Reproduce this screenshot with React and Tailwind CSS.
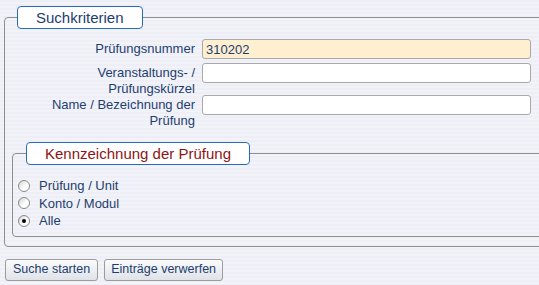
import React, { useState } from "react";

const font = { fontFamily: '"Liberation Sans", Arial, sans-serif' };

const Legend = ({ children, red }) => (
  <legend
    className={`h-[23px] mb-[4px] px-[18px] rounded-[4px] border border-[#2a6cbc] bg-white text-[15px] leading-[21px] ${
      red ? "ml-[8px] text-[#8e1414]" : "ml-[5px] text-[#1d3e6f]"
    }`}
  >
    {children}
  </legend>
);

const Radio = ({ checked, label, onChange }) => (
  <label className="flex items-center h-[17.5px] cursor-pointer" onClick={onChange}>
    <span className="flex items-center justify-center w-[12px] h-[12px] rounded-full border border-[#8a8a8a] bg-[linear-gradient(135deg,#d4d4d4,#ffffff_60%)]">
      {checked && <span className="w-[4px] h-[4px] rounded-full bg-black" />}
    </span>
    <span className="ml-[9px] text-[13px] text-[#1d3e6f]">{label}</span>
  </label>
);

export default function App() {
  const [nummer, setNummer] = useState("310202");
  const [kuerzel, setKuerzel] = useState("");
  const [name, setName] = useState("");
  const [kind, setKind] = useState("alle");

  const inputCls =
    "w-[329px] h-[20px] rounded-[3px] border border-[#a9a9a9] px-[3px] text-[13px] text-[#1d3e6f] outline-none";

  return (
    <div
      style={font}
      className="w-[539px] min-h-screen overflow-hidden pt-[6px] pl-[4px] bg-[repeating-linear-gradient(to_bottom,#eeeff6_0px,#eeeff6_2px,#f2f3f8_2px,#f2f3f8_4px)]"
    >
      <fieldset className="w-[560px] border border-[#8f8f8f] rounded-[4px] pl-[7px] pb-[9px]">
        <Legend>Suchkriterien</Legend>

        {/* Suchfelder */}
        <div className="flex flex-col pt-[6px]">
          <div className="flex items-start h-[24px]">
            <span className="w-[183px] pt-[2px] text-right text-[13px] leading-[16px] text-[#1d3e6f]">
              Prüfungsnummer
            </span>
            <input
              className={`ml-[7px] bg-[#fdefd0] ${inputCls}`}
              value={nummer}
              onChange={(e) => setNummer(e.target.value)}
            />
          </div>
          <div className="flex items-start h-[32px]">
            <span className="w-[183px] pt-[2px] text-right text-[13px] leading-[16px] text-[#1d3e6f]">
              Veranstaltungs- /<br />
              Prüfungskürzel
            </span>
            <input
              className={`ml-[7px] bg-white ${inputCls}`}
              value={kuerzel}
              onChange={(e) => setKuerzel(e.target.value)}
            />
          </div>
          <div className="flex items-start h-[34px]">
            <span className="w-[183px] pt-[2px] text-right text-[13px] leading-[16px] text-[#1d3e6f]">
              Name / Bezeichnung der
              <br />
              Prüfung
            </span>
            <input
              className={`ml-[7px] bg-white ${inputCls}`}
              value={name}
              onChange={(e) => setName(e.target.value)}
            />
          </div>
        </div>

        {/* Kennzeichnung */}
        <fieldset className="mt-[13px] border border-[#8f8f8f] rounded-[4px] pl-[5px] pt-[8px] pb-[6px]">
          <Legend red>Kennzeichnung der Prüfung</Legend>
          <Radio
            label="Prüfung / Unit"
            checked={kind === "unit"}
            onChange={() => setKind("unit")}
          />
          <Radio
            label="Konto / Modul"
            checked={kind === "modul"}
            onChange={() => setKind("modul")}
          />
          <Radio
            label="Alle"
            checked={kind === "alle"}
            onChange={() => setKind("alle")}
          />
        </fieldset>
      </fieldset>

      {/* Buttons */}
      <div className="flex gap-[6px] mt-[12px] ml-[1px]">
        <button className="h-[22px] px-[7px] rounded-[3px] border border-[#9c9c9c] bg-[linear-gradient(to_bottom,#fbfbfc,#dfe2e8)] text-[12.5px] text-[#1d3e6f]">
          Suche starten
        </button>
        <button className="h-[22px] px-[6px] rounded-[3px] border border-[#9c9c9c] bg-[linear-gradient(to_bottom,#fbfbfc,#dfe2e8)] text-[12.5px] text-[#1d3e6f]">
          Einträge verwerfen
        </button>
      </div>
    </div>
  );
}
